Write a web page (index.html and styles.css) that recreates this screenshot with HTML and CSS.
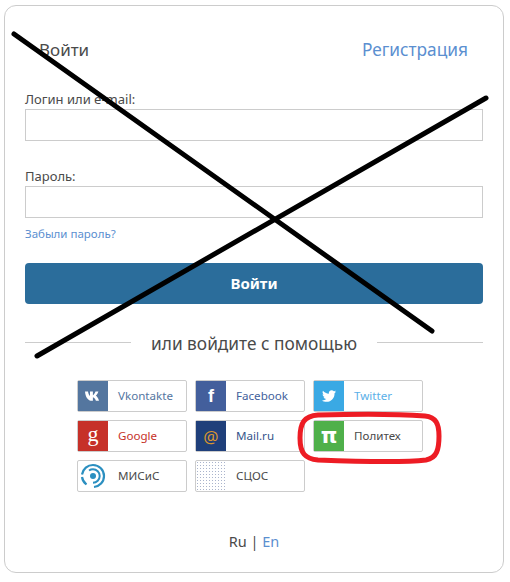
FILE: index.html
```html
<!DOCTYPE html>
<html lang="ru">

<head>
  <meta charset="UTF-8">
  <meta name="viewport" content="width=device-width, initial-scale=1.0">
  <title>Войти</title>
  <link rel="stylesheet" href="styles.css">
</head>

<body>
  <div class="card">
    <div class="tabs">
      <span class="tab">Войти</span>
      <a class="tab tab-link" href="#">Регистрация</a>
    </div>

    <form class="login-form">
      <label class="field-label" for="login">Логин или e-mail:</label>
      <input class="field-input" type="text" id="login">

      <label class="field-label" for="password">Пароль:</label>
      <input class="field-input" type="password" id="password">

      <a class="forgot" href="#">Забыли пароль?</a>

      <button class="submit" type="button">Войти</button>
    </form>

    <div class="divider">
      <span class="divider-line"></span>
      <span class="divider-text">или войдите с помощью</span>
      <span class="divider-line"></span>
    </div>

    <div class="socials">
      <a class="social social-vk" href="#">
        <span class="social-icon">
          <svg width="16" height="10" viewBox="0 0 16 10">
            <path fill="#fff" d="M0 .4h3c.3 2 1.100 3.800 2 4.500V.4h2.900v3.800C8.900 3.500 9.900 2 10.500.4h2.900c-.4 1.500-1.400 3-2.500 4.200 1.300 1 2.500 3 3.100 5.100h-3.100c-.6-1.700-1.600-3-3-3.500v3.500H6.900C3 9.700.4 6 0 .4z"/>
          </svg>
        </span>
        <span class="social-name">Vkontakte</span>
      </a>
      <a class="social social-fb" href="#">
        <span class="social-icon social-glyph social-f">f</span>
        <span class="social-name">Facebook</span>
      </a>
      <a class="social social-tw" href="#">
        <span class="social-icon">
          <svg width="14" height="12" viewBox="0 0 24 20">
            <path fill="#fff" d="M24 2.400c-.9.400-1.800.7-2.800.8 1-.6 1.800-1.600 2.200-2.700-1 .6-2 1-3.100 1.200C19.300.7 18 0 16.600 0c-2.700 0-4.900 2.200-4.900 4.900 0 .4 0 .8.100 1.100C7.700 5.800 4.100 3.900 1.700.9c-.4.700-.7 1.600-.7 2.500 0 1.700.9 3.200 2.200 4.100-.8 0-1.600-.2-2.200-.6v.1c0 2.400 1.700 4.400 3.900 4.800-.8.200-1.500.2-2.200.1.600 2 2.400 3.400 4.600 3.400-2 1.600-4.700 2.500-7.300 2.200C2.200 19.200 4.800 20 7.500 20c9.100 0 14-7.500 14-14v-.6c1-.7 1.800-1.600 2.500-3z"/>
          </svg>
        </span>
        <span class="social-name">Twitter</span>
      </a>
      <a class="social social-gp" href="#">
        <span class="social-icon social-glyph social-g">g</span>
        <span class="social-name">Google</span>
      </a>
      <a class="social social-mail" href="#">
        <span class="social-icon social-at">@</span>
        <span class="social-name">Mail.ru</span>
      </a>
      <a class="social social-poly" href="#">
        <span class="social-icon social-glyph social-pi">π</span>
        <span class="social-name">Политех</span>
      </a>
      <a class="social social-misis" href="#">
        <span class="social-icon">
          <svg width="26" height="26" viewBox="0 0 26 26" fill="none" stroke="#2b8fc0">
            <path stroke-width="2.200" d="M2 11.500C3 6 7.500 2 13 2c6.200 0 11 5 11 11s-4.500 10.500-10 11"/>
            <path stroke-width="2.200" d="M2 14c.4 3 2 5.500 4.500 7.500"/>
            <path stroke-width="2" d="M9 7.500c1.200-.8 2.600-1.200 4-1.200 3.700 0 6.700 3 6.700 6.700s-3 6.700-6.700 6.700"/>
            <circle cx="13" cy="13" r="3" fill="#2b8fc0" stroke="none"/>
          </svg>
        </span>
        <span class="social-name">МИСиС</span>
      </a>
      <a class="social social-scos" href="#">
        <span class="social-icon social-dots"></span>
        <span class="social-name">СЦОС</span>
      </a>
    </div>

    <div class="langs">Ru | <a href="#">En</a></div>
  </div>

  <!-- пометки поверх скриншота -->
  <svg class="marks" width="510" height="582" viewBox="0 0 510 582" fill="none">
    <path stroke="#000" stroke-width="5" stroke-linecap="round" d="M14 34L432 331"/>
    <path stroke="#000" stroke-width="5" stroke-linecap="round" d="M37 356L486 98"/>
    <path stroke="#ed1c24" stroke-width="5" d="M318 415C350 414 400 414 425 416C436 417 439 424 439 436C439 449 437 458 426 460C400 463 345 461 318 460C305 459 300 453 300 438C300 423 304 416 318 415z"/>
  </svg>
</body>

</html>
```

FILE: styles.css
```css
:root {
  --text-color: #4a4a4a;
  --link-color: #5b8fd0;
  --border-color: #ccc;
  --primary-color: #2b6d9b;
}

body {
  margin: 0;
  font-family: "Noto Sans", "Open Sans", sans-serif;
  color: var(--text-color);
}

a {
  color: var(--link-color);
  text-decoration: none;
}

.card {
  box-sizing: border-box;
  width: 500px;
  height: 568px;
  margin: 5px 0 0 4px;
  padding: 30px 20px 0;
  border: 1px solid var(--border-color);
  border-radius: 12px;
}

.tabs {
  display: flex;
  justify-content: space-between;
  padding: 0 15px 0 14px;
  height: 28px;
  line-height: 28px;
}

.tab {
  font-size: 17px;
}

.tab-link {
  font-size: 17.3px;
}

.login-form {
  display: flex;
  flex-direction: column;
}

.field-label {
  margin-top: 25px;
  font-size: 13px;
  line-height: 20px;
}

.field-input {
  box-sizing: border-box;
  height: 32px;
  padding: 0 8px;
  border: 1px solid var(--border-color);
  outline: none;
}

.forgot {
  margin-top: 7px;
  font-size: 11.500px;
  line-height: 18px;
}

.submit {
  height: 41px;
  margin-top: 20px;
  padding-bottom: 3px;
  border: none;
  border-radius: 4px;
  background-color: var(--primary-color);
  color: white;
  font-family: inherit;
  font-size: 15px;
  font-weight: bold;
}

.divider {
  display: flex;
  align-items: center;
  justify-content: space-between;
  height: 20px;
  margin-top: 28px;
}

.divider-line {
  width: 106px;
  border-top: 1px solid var(--border-color);
}

.divider-text {
  font-size: 17.3px;
  line-height: 20px;
  padding-top: 3px;
}

.socials {
  display: grid;
  grid-template-columns: repeat(3, 110px);
  grid-auto-rows: 32px;
  gap: 8px;
  margin: 28px 0 0 52px;
}

.social {
  box-sizing: border-box;
  display: flex;
  align-items: center;
  border: 1px solid var(--border-color);
  border-radius: 2px;
  font-size: 11.600px;
}

.social-icon {
  display: flex;
  align-items: center;
  justify-content: center;
  flex: none;
  width: 30px;
  height: 30px;
  color: white;
}

.social-name {
  margin: 0 0 2px 10px;
}

.social-glyph {
  font-weight: bold;
  line-height: 1;
}

.social-f {
  font-family: "Liberation Sans", sans-serif;
  font-size: 18px;
}

.social-g {
  font-family: "Liberation Serif", serif;
  font-size: 22px;
  font-weight: normal;
  padding-bottom: 5px;
  box-sizing: border-box;
}

.social-pi {
  font-family: "DejaVu Sans", sans-serif;
  font-size: 21px;
}

.social-at {
  font-size: 17px;
  color: #d9952f;
}

.social-dots {
  background-image: radial-gradient(#aab4cc 0.7px, transparent 0.8px);
  background-size: 3px 3px;
}

.social-vk .social-icon { background-color: #54769f; }
.social-vk .social-name { color: #54769f; }
.social-fb .social-icon { background-color: #435f9c; }
.social-fb .social-name { color: #435f9c; }
.social-tw .social-icon { background-color: #3aa9e4; }
.social-tw .social-name { color: #5ab0e8; }
.social-gp .social-icon { background-color: #c63129; }
.social-gp .social-name { color: #c63129; }
.social-mail .social-icon { background-color: #1f3f7a; }
.social-mail .social-name { color: #35558c; }
.social-poly .social-icon { background-color: #4fb04a; }
.social-poly .social-name,
.social-misis .social-name,
.social-scos .social-name { color: var(--text-color); }

.langs {
  margin-top: 39px;
  text-align: center;
  font-size: 14.500px;
  line-height: 20px;
}

.marks {
  position: absolute;
  top: 0;
  left: 0;
  pointer-events: none;
}
```
